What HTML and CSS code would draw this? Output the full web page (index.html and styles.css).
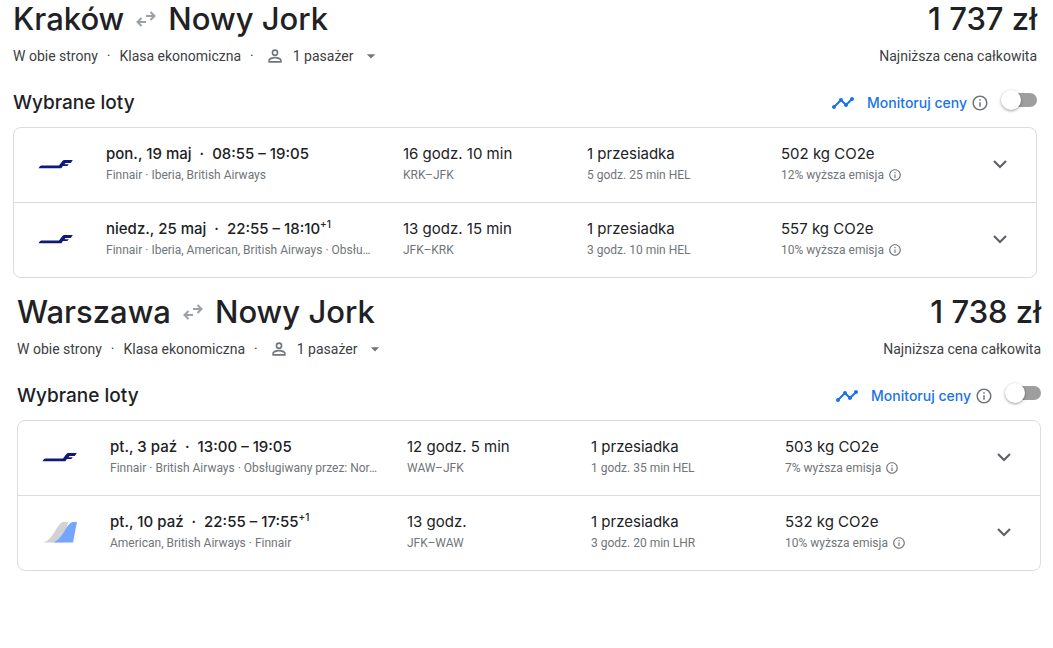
FILE: index.html
```html
<!DOCTYPE html>
<html lang="pl">
<head>
<meta charset="utf-8">
<meta name="viewport" content="width=device-width, initial-scale=1">
<title>Wybrane loty</title>
<link rel="stylesheet" href="styles.css">
</head>
<body>
<svg class="sprite" aria-hidden="true">
  <symbol id="swap" viewBox="0 0 20 16"><path d="M10 5h8M14.500 1l4 4-4 4M10 11H2M5.500 7l-4 4 4 4" fill="none" stroke="currentColor" stroke-width="2"/></symbol>
  <symbol id="person" viewBox="0 0 24 24"><path fill="currentColor" d="M12 5.900a2.100 2.100 0 1 1 0 4.200 2.100 2.100 0 0 1 0-4.200m0 9c2.970 0 6.100 1.460 6.100 2.100v1.100H5.900V17c0-.64 3.130-2.100 6.100-2.100M12 4a4 4 0 1 0 0 8 4 4 0 0 0 0-8zm0 9c-2.670 0-8 1.340-8 4v3h16v-3c0-2.660-5.330-4-8-4z"/></symbol>
  <symbol id="drop" viewBox="0 0 24 24"><path fill="currentColor" d="M7 10l5 5 5-5z"/></symbol>
  <symbol id="trend" viewBox="0 0 24 24"><path fill="currentColor" d="M23 8c0 1.100-.9 2-2 2-.18 0-.35-.02-.51-.07l-3.560 3.550c.05.16.07.34.07.52 0 1.100-.9 2-2 2s-2-.9-2-2c0-.18.02-.36.07-.52l-2.550-2.550c-.16.05-.34.07-.52.07s-.36-.02-.52-.07l-4.550 4.560c.05.16.07.33.07.51 0 1.100-.9 2-2 2s-2-.9-2-2 .9-2 2-2c.18 0 .35.02.51.07l4.560-4.550C8.020 9.360 8 9.180 8 9c0-1.100.9-2 2-2s2 .9 2 2c0 .18-.02.36-.07.52l2.550 2.550c.16-.05.34-.07.52-.07s.36.02.52.07l3.550-3.560C19.020 8.350 19 8.180 19 8c0-1.100.9-2 2-2s2 .9 2 2z"/></symbol>
  <symbol id="info" viewBox="0 0 24 24"><path fill="currentColor" d="M11 7h2v2h-2zm0 4h2v6h-2zm1-9C6.480 2 2 6.480 2 12s4.480 10 10 10 10-4.480 10-10S17.520 2 12 2zm0 18c-4.410 0-8-3.590-8-8s3.590-8 8-8 8 3.590 8 8-3.590 8-8 8z"/></symbol>
  <symbol id="chevron" viewBox="0 0 24 24"><path d="M6 9l6 6 6-6" fill="none" stroke="currentColor" stroke-width="2.200"/></symbol>
  <symbol id="finnair" viewBox="0 0 36 36"><path fill="#0f1a7a" d="M.5 22.300h22.800l1.700-2.200h4.300l1.500-1.800h-4.300l1-1.400h5.300l2-3h-8.300q-1.400 0-2.300 1.300l-3.200 4.300H3.200q-1.200 0-2.700 2.800z"/></symbol>
  <symbol id="multi" viewBox="0 0 36 36"><path fill="#d0d2d5" d="M1.500 28.500c6-2 9-7 12.500-13 3-5 5-7.500 8-7.500h4l-4 20.500z"/><path fill="#76a5ff" d="M11.500 28.500c6-3 9-8 12-13 3-5 5-7.500 8-7.500h3.500l-4 20.500z"/></symbol>
</svg>
<main>
  <section class="trip">
    <header class="trip-head">
      <h1 class="route">Kraków <svg class="swap"><use href="#swap"/></svg> Nowy Jork</h1>
      <p class="price">1 737 zł</p>
    </header>
    <div class="meta">
      <p class="options"><span>W obie strony</span><span class="dot">·</span><span>Klasa ekonomiczna</span><span class="dot">·</span>
        <button class="passengers" type="button"><svg class="icon20"><use href="#person"/></svg>1 pasażer<svg class="icon20 drop"><use href="#drop"/></svg></button></p>
      <p>Najniższa cena całkowita</p>
    </div>
    <div class="bar">
      <h2>Wybrane loty</h2>
      <div class="track">
        <svg class="trend"><use href="#trend"/></svg>
        <label class="track-label" for="track-krk">Monitoruj ceny</label>
        <svg class="info-large"><use href="#info"/></svg>
        <input class="toggle" id="track-krk" type="checkbox" role="switch">
      </div>
    </div>
    <ul class="flights">
      <li class="flight">
        <svg class="logo"><use href="#finnair"/></svg>
        <div class="cell"><p class="main strong">pon., 19 maj &nbsp;·&nbsp; 08:55 – 19:05</p><p class="sub">Finnair · Iberia, British Airways</p></div>
        <div class="cell"><p class="main">16 godz. 10 min</p><p class="sub">KRK–JFK</p></div>
        <div class="cell"><p class="main">1 przesiadka</p><p class="sub">5 godz. 25 min HEL</p></div>
        <div class="cell"><p class="main">502 kg CO2e</p><p class="sub emission">12% wyższa emisja <svg class="info"><use href="#info"/></svg></p></div>
        <button class="expand" type="button" aria-label="Szczegóły lotu"><svg class="chevron"><use href="#chevron"/></svg></button>
      </li>
      <li class="flight">
        <svg class="logo"><use href="#finnair"/></svg>
        <div class="cell"><p class="main strong">niedz., 25 maj &nbsp;·&nbsp; 22:55 – 18:10<sup>+1</sup></p><p class="sub">Finnair · Iberia, American, British Airways · Obsłu…</p></div>
        <div class="cell"><p class="main">13 godz. 15 min</p><p class="sub">JFK–KRK</p></div>
        <div class="cell"><p class="main">1 przesiadka</p><p class="sub">3 godz. 10 min HEL</p></div>
        <div class="cell"><p class="main">557 kg CO2e</p><p class="sub emission">10% wyższa emisja <svg class="info"><use href="#info"/></svg></p></div>
        <button class="expand" type="button" aria-label="Szczegóły lotu"><svg class="chevron"><use href="#chevron"/></svg></button>
      </li>
    </ul>
  </section>
  <section class="trip trip-second">
    <header class="trip-head">
      <h1 class="route">Warszawa <svg class="swap"><use href="#swap"/></svg> Nowy Jork</h1>
      <p class="price">1 738 zł</p>
    </header>
    <div class="meta">
      <p class="options"><span>W obie strony</span><span class="dot">·</span><span>Klasa ekonomiczna</span><span class="dot">·</span>
        <button class="passengers" type="button"><svg class="icon20"><use href="#person"/></svg>1 pasażer<svg class="icon20 drop"><use href="#drop"/></svg></button></p>
      <p>Najniższa cena całkowita</p>
    </div>
    <div class="bar">
      <h2>Wybrane loty</h2>
      <div class="track">
        <svg class="trend"><use href="#trend"/></svg>
        <label class="track-label" for="track-waw">Monitoruj ceny</label>
        <svg class="info-large"><use href="#info"/></svg>
        <input class="toggle" id="track-waw" type="checkbox" role="switch">
      </div>
    </div>
    <ul class="flights">
      <li class="flight">
        <svg class="logo"><use href="#finnair"/></svg>
        <div class="cell"><p class="main strong">pt., 3 paź &nbsp;·&nbsp; 13:00 – 19:05</p><p class="sub">Finnair · British Airways · Obsługiwany przez: Nor…</p></div>
        <div class="cell"><p class="main">12 godz. 5 min</p><p class="sub">WAW–JFK</p></div>
        <div class="cell"><p class="main">1 przesiadka</p><p class="sub">1 godz. 35 min HEL</p></div>
        <div class="cell"><p class="main">503 kg CO2e</p><p class="sub emission">7% wyższa emisja <svg class="info"><use href="#info"/></svg></p></div>
        <button class="expand" type="button" aria-label="Szczegóły lotu"><svg class="chevron"><use href="#chevron"/></svg></button>
      </li>
      <li class="flight">
        <svg class="logo"><use href="#multi"/></svg>
        <div class="cell"><p class="main strong">pt., 10 paź &nbsp;·&nbsp; 22:55 – 17:55<sup>+1</sup></p><p class="sub">American, British Airways · Finnair</p></div>
        <div class="cell"><p class="main">13 godz.</p><p class="sub">JFK–WAW</p></div>
        <div class="cell"><p class="main">1 przesiadka</p><p class="sub">3 godz. 20 min LHR</p></div>
        <div class="cell"><p class="main">532 kg CO2e</p><p class="sub emission">10% wyższa emisja <svg class="info"><use href="#info"/></svg></p></div>
        <button class="expand" type="button" aria-label="Szczegóły lotu"><svg class="chevron"><use href="#chevron"/></svg></button>
      </li>
    </ul>
  </section>
</main>
</body>
</html>
```
FILE: styles.css
```css
* { box-sizing: border-box; }
body, h1, h2, p, ul { margin: 0; padding: 0; }
body {
  background: #fff;
  color: #202124;
  font-family: Roboto, "Liberation Sans", sans-serif;
  font-size: 14px;
}
button { border: 0; padding: 0; background: none; color: inherit; font: inherit; cursor: pointer; }
svg { flex: none; }
.sprite { display: none; }

.trip { padding: 0 16px 15px 13px; }
.trip-second { padding: 0 12px 15px 17px; }

.trip-head { display: flex; justify-content: space-between; padding-bottom: 2px; }
.route, .price {
  display: flex;
  align-items: center;
  gap: 12px;
  font-family: Inter, sans-serif;
  font-size: 31px;
  font-weight: 500;
  line-height: 38px;
}
.swap { width: 20px; height: 16px; color: #9aa0a6; }

.meta { display: flex; justify-content: space-between; line-height: 32px; color: #3c4043; }
.options { display: flex; align-items: center; }
.dot { padding: 0 9px; }
.passengers { display: flex; align-items: center; gap: 8px; margin-left: 2px; }
.icon20 { width: 20px; height: 20px; color: #70757a; }

.bar { display: flex; align-items: center; justify-content: space-between; height: 28px; margin: 17px 0 10px; }
.bar h2 { font: 500 19px/28px Inter, sans-serif; }
.track { display: flex; align-items: center; color: #1a73e8; }
.track-label { margin: 0 4px 0 12px; font: 500 14px/28px Inter, sans-serif; }
.trend { width: 24px; height: 24px; }
.info-large { width: 18px; height: 18px; color: #70757a; }
.toggle {
  appearance: none;
  position: relative;
  width: 32px;
  height: 14px;
  margin: 0 0 6px 16px;
  border-radius: 7px;
  background: #9e9e9e;
}
.toggle::before {
  content: "";
  position: absolute;
  top: -3px;
  left: -4px;
  width: 20px;
  height: 20px;
  border-radius: 50%;
  background: #fff;
  box-shadow: 0 1px 3px rgba(0, 0, 0, .4);
}
.toggle:checked { background: #8ab4f8; }
.toggle:checked::before { left: 16px; background: #1a73e8; }

.flights { border: 1px solid #dadce0; border-radius: 8px; list-style: none; }
.flight {
  display: grid;
  grid-template-columns: 92px 297fr 184fr 194fr 183fr 72px;
  align-items: center;
  min-height: 74px;
  padding-bottom: 2px;
}
.flight + .flight { min-height: 75px; border-top: 1px solid #dadce0; }
.logo { width: 36px; height: 36px; margin-left: 24px; }
.cell { min-width: 0; padding-bottom: 2px; }
.main { font: 400 15px/24px Inter, sans-serif; white-space: nowrap; }
.strong { font-weight: 500; }
.main sup { font-size: 10px; line-height: 0; }
.sub {
  color: #70757a;
  font-size: 12px;
  line-height: 18px;
  white-space: nowrap;
}
.emission { display: flex; align-items: center; gap: 4px; }
.info { width: 14px; height: 14px; }
.expand { justify-self: center; width: 24px; height: 24px; color: #5f6368; }
.chevron { display: block; width: 24px; height: 24px; }
```
